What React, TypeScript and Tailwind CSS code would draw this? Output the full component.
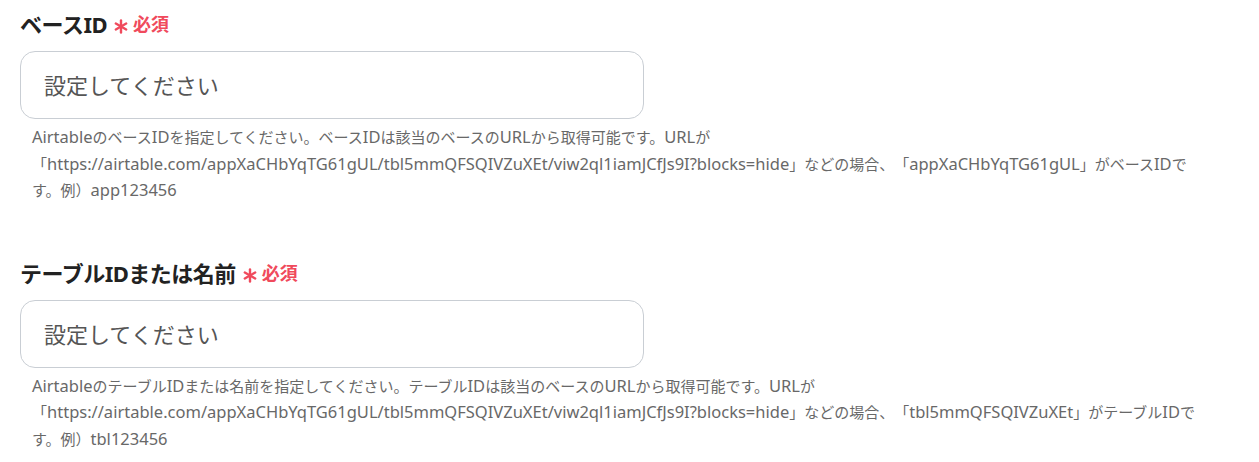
const font = { fontFamily: '"Noto Sans", "Noto Sans CJK JP", sans-serif' };

type FieldProps = {
  label: string;
  lines: string[];
};

// Latin runs are set a little larger than kana/kanji, as in the original UI font
function Mixed({ text }: { text: string }) {
  const parts = text.split(/([\x20-\x7E]+)/).filter(Boolean);
  return (
    <>
      {parts.map((p, i) =>
        /^[\x20-\x7E]+$/.test(p) ? (
          <span key={i} className="text-[16.5px]">
            {p}
          </span>
        ) : (
          <span key={i} className="text-[15px]">
            {p}
          </span>
        )
      )}
    </>
  );
}

function Asterisk() {
  return (
    <svg width="14" height="15" viewBox="0 0 14 15" className="ml-[7px] mt-[5px] text-[#f04a5c]">
      <g stroke="currentColor" strokeWidth="2.4" strokeLinecap="round">
        <line x1="7" y1="1.5" x2="7" y2="13.5" />
        <line x1="1.8" y1="4.5" x2="12.2" y2="10.5" />
        <line x1="1.8" y1="10.5" x2="12.2" y2="4.5" />
      </g>
    </svg>
  );
}

function Field({ label, lines }: FieldProps) {
  return (
    <div className="flex flex-col">
      <div className="flex items-center h-6 leading-6">
        <span className="text-[22px] font-bold text-[#222] tracking-[-0.5px]">{label}</span>
        <Asterisk />
        <span className="ml-[5px] text-[18px] font-bold text-[#f04a5c]">必須</span>
      </div>
      <input
        type="text"
        placeholder="設定してください"
        className="mt-[15px] w-[624px] h-[68px] rounded-[15px] border border-[#c9ced4] bg-white pl-[23px] text-[22px] text-[#333] placeholder:text-[#555] outline-none"
        style={font}
      />
      <p className="mt-[5px] ml-3 leading-[26.5px] text-[#686868] [text-spacing-trim:space-all]">
        {lines.map((l, i) => (
          <span key={i} className="block whitespace-nowrap">
            <Mixed text={l} />
          </span>
        ))}
      </p>
    </div>
  );
}

export default function App() {
  return (
    <div className="w-[1259px] h-[462px] bg-white pl-5 pt-3 overflow-hidden" style={font}>
      <Field
        label="ベースID"
        lines={[
          'AirtableのベースIDを指定してください。ベースIDは該当のベースのURLから取得可能です。URLが',
          '「https://airtable.com/appXaCHbYqTG61gUL/tbl5mmQFSQIVZuXEt/viw2ql1iamJCfJs9I?blocks=hide」などの場合、「appXaCHbYqTG61gUL」がベースIDで',
          'す。例）app123456',
        ]}
      />
      <div className="mt-[57px]">
        <Field
          label="テーブルIDまたは名前"
          lines={[
            'AirtableのテーブルIDまたは名前を指定してください。テーブルIDは該当のベースのURLから取得可能です。URLが',
            '「https://airtable.com/appXaCHbYqTG61gUL/tbl5mmQFSQIVZuXEt/viw2ql1iamJCfJs9I?blocks=hide」などの場合、「tbl5mmQFSQIVZuXEt」がテーブルIDで',
            'す。例）tbl123456',
          ]}
        />
      </div>
    </div>
  );
}
